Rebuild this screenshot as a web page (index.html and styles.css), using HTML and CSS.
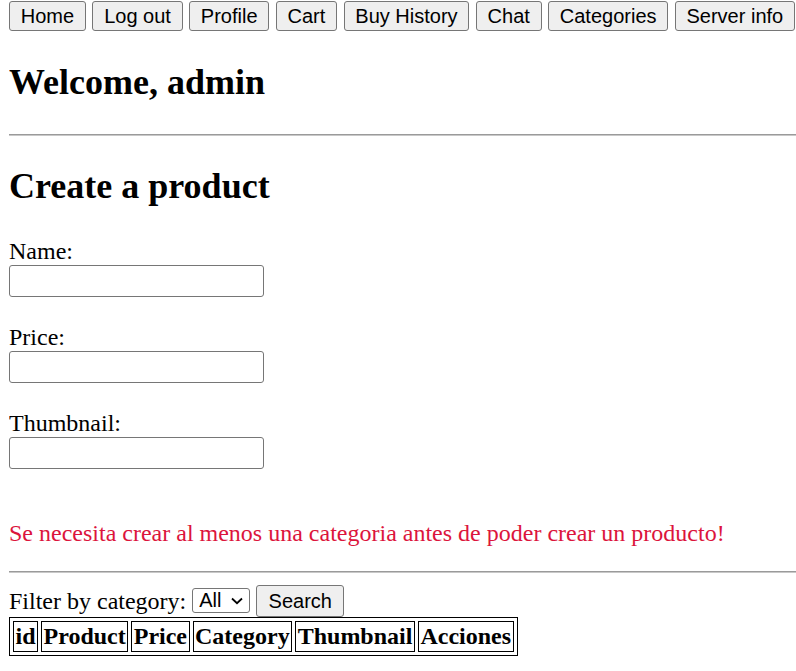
FILE: index.html
```html
<!DOCTYPE html>
<html lang="en">
<head>
<meta charset="utf-8">
<title>Admin</title>
<link rel="stylesheet" href="styles.css">
</head>
<body>
<nav class="nav">
  <button class="btn">Home</button>
  <button class="btn">Log out</button>
  <button class="btn">Profile</button>
  <button class="btn">Cart</button>
  <button class="btn">Buy History</button>
  <button class="btn">Chat</button>
  <button class="btn">Categories</button>
  <button class="btn">Server info</button>
</nav>
<h2 class="welcome">Welcome, admin</h2>
<hr class="rule rule-top">
<h2 class="create">Create a product</h2>
<form class="form">
  <label class="field">
    <span class="field-label">Name:</span>
    <input class="field-input" type="text">
  </label>
  <label class="field">
    <span class="field-label">Price:</span>
    <input class="field-input" type="text">
  </label>
  <label class="field">
    <span class="field-label">Thumbnail:</span>
    <input class="field-input" type="text">
  </label>
</form>
<p class="warning">Se necesita crear al menos una categoria antes de poder crear un producto!</p>
<hr class="rule rule-bottom">
<div class="filter">
  <span class="filter-label">Filter by category:</span>
  <span class="select-wrap">
    <select class="filter-select"><option>All</option></select>
    <svg class="select-arrow" width="14" height="8" viewBox="0 0 14 8" aria-hidden="true"><path d="M2 1.5 L7 6.2 L12 1.5" fill="none" stroke="#000" stroke-width="1.8"/></svg>
  </span>
  <button class="btn btn-search">Search</button>
</div>
<table class="products">
  <thead>
    <tr>
      <th>id</th>
      <th>Product</th>
      <th>Price</th>
      <th>Category</th>
      <th>Thumbnail</th>
      <th>Acciones</th>
    </tr>
  </thead>
</table>
</body>
</html>
```
FILE: styles.css
```css
html, body {
  background: #ffffff;
}
body {
  margin: 1px 0 0 9px;
  font-family: "Liberation Serif", "Times New Roman", serif;
  font-size: 24px;
  line-height: 28px;
  color: #000000;
}
.nav {
  display: flex;
  gap: 6.4px;
}
.btn {
  flex-shrink: 0;
  white-space: nowrap;
  font-family: "Liberation Sans", Arial, sans-serif;
  font-size: 20px;
  line-height: 23px;
  height: 30px;
  padding: 0 10.8px;
  margin: 0;
  border: 1px solid #767676;
  border-radius: 3px;
  background: #efefef;
  color: #000000;
  box-sizing: border-box;
}
.welcome, .create {
  font-size: 36px;
  line-height: 41px;
  font-weight: bold;
  margin: 31px 0 31px;
}
.create {
  margin: 30px 0 30px;
}
.rule {
  border: 0;
  border-top: 1px solid #9a9a9a;
  border-bottom: 1px solid #c8c8c8;
  height: 0;
  margin: 0;
}
.form {
  display: flex;
  flex-direction: column;
  gap: 26px;
}
.field {
  display: flex;
  flex-direction: column;
  align-items: flex-start;
}
.field-label {
  display: block;
  height: 28px;
}
.field-input {
  width: 255px;
  height: 32px;
  box-sizing: border-box;
  border: 1px solid #767676;
  border-radius: 3px;
  margin: 0;
  padding: 1px 3px;
  font-size: 20px;
}
.warning {
  color: #dc143c;
  margin: 50px 0 24px;
}
.filter {
  margin-top: 12px;
  height: 32px;
  display: flex;
  align-items: center;
  gap: 6px;
}
.select-wrap {
  position: relative;
  display: flex;
  margin-top: -2px;
}
.filter-select {
  -webkit-appearance: none;
  appearance: none;
  font-family: "Liberation Sans", Arial, sans-serif;
  font-size: 20px;
  line-height: 23px;
  width: 58px;
  height: 25px;
  box-sizing: border-box;
  border: 1px solid #767676;
  border-radius: 3px;
  background: #ffffff;
  color: #000000;
  margin: 0;
  padding: 0 0 0 6px;
}
.select-arrow {
  position: absolute;
  left: 38px;
  top: 9px;
  pointer-events: none;
}
.btn-search {
  height: 32px;
  width: 88px;
}
.products {
  border: 1px solid #000000;
  border-spacing: 3px;
}
.products th {
  border: 1px solid #000000;
  padding: 1px 1.5px;
  font-size: 24px;
  line-height: 27px;
  font-weight: bold;
}
```
